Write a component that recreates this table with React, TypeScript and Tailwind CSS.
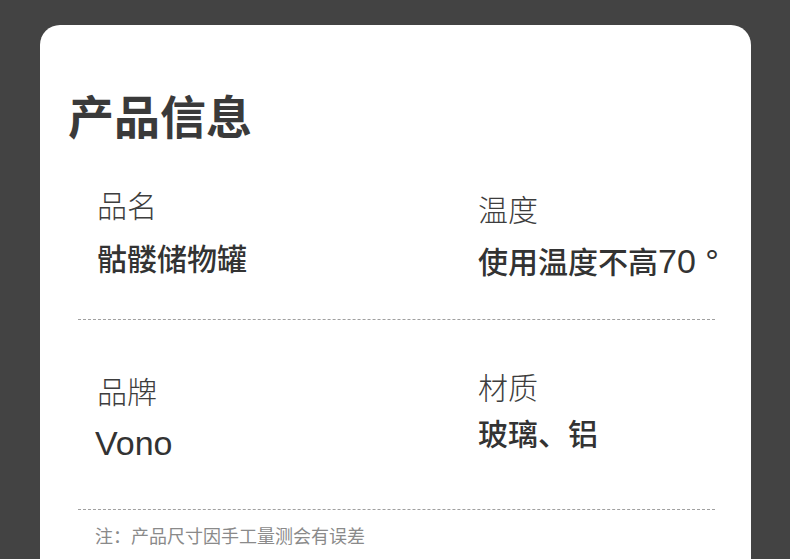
import React from "react";

const font = "font-['Liberation_Sans','Noto_Sans_CJK_SC',sans-serif]";

const InfoCell = ({
	label,
	children,
	padTop,
	gap,
}: {
	label: string;
	children: React.ReactNode;
	padTop: string;
	gap: string;
}) => {
	return (
		<div className={`flex flex-col ${padTop}`}>
			<p className="text-[30px] leading-none font-light text-[#3d3d3d]">
				{label}
			</p>
			<p
				className={`${gap} text-[30px] leading-[30px] h-[30px] font-medium text-[#333333] whitespace-nowrap`}
			>
				{children}
			</p>
		</div>
	);
};

const App = () => {
	return (
		<div
			className={`w-[790px] h-[559px] overflow-hidden bg-[#434343] pt-[25px] pl-[40px] ${font}`}
		>
			<div className="w-[711px] h-[560px] bg-white rounded-[20px] pt-[70px]">
				<h1 className="pl-[28px] text-[46px] leading-none h-[46px] font-bold text-[#3a3a3a]">
					产品信息
				</h1>
				<div className="ml-[38px] w-[637px]">
					<div className="grid grid-cols-[400px_1fr] h-[179px] border-b border-dashed border-[#a0a0a0]">
						<div className="pl-[19px]">
							<InfoCell label="品名" padTop="pt-[51px]" gap="mt-[23px]">
								骷髅储物罐
							</InfoCell>
						</div>
						<InfoCell label="温度" padTop="pt-[55px]" gap="mt-[20px]">
							使用温度不高
							<span className="text-[34px] font-normal">70 °</span>
						</InfoCell>
					</div>
					<div className="grid grid-cols-[400px_1fr] h-[190px] border-b border-dashed border-[#a0a0a0]">
						<div className="pl-[19px]">
							<InfoCell label="品牌" padTop="pt-[58px]" gap="mt-[20px]">
								<span className="text-[34px] font-normal -ml-[2px]">Vono</span>
							</InfoCell>
						</div>
						<InfoCell label="材质" padTop="pt-[54px]" gap="mt-[16px]">
							玻璃、铝
						</InfoCell>
					</div>
					<p className="pl-[17px] mt-[18px] text-[18px] leading-none text-[#8a8a8a]">
						注：产品尺寸因手工量测会有误差
					</p>
				</div>
			</div>
		</div>
	);
};

export default App;
